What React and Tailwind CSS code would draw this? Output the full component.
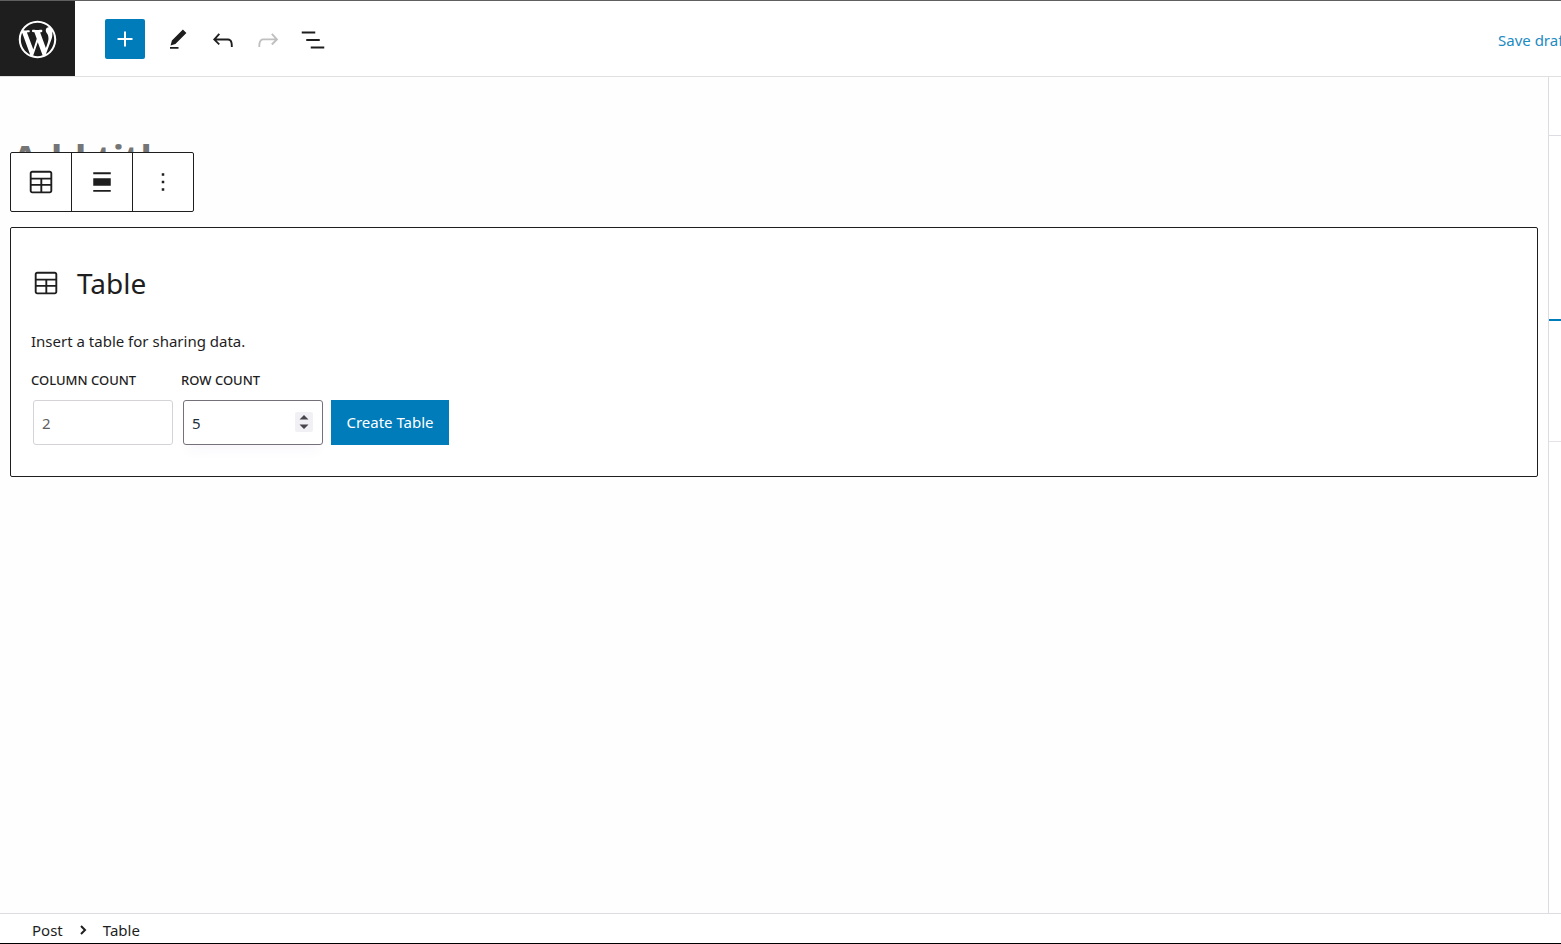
import React from "react";

const icons = {
  wordpress:
    "M20 10c0-5.51-4.49-10-10-10C4.48 0 0 4.49 0 10c0 5.52 4.48 10 10 10 5.51 0 10-4.48 10-10zM7.78 15.37L4.37 6.22c.55-.02 1.17-.08 1.17-.08.5-.06.44-1.13-.06-1.11 0 0-1.45.11-2.37.11-.18 0-.37 0-.58-.01C4.12 2.69 6.87 1.11 10 1.11c2.33 0 4.45.87 6.05 2.34-.68-.11-1.65.39-1.65 1.58 0 .74.45 1.36.9 2.1.35.61.55 1.36.55 2.46 0 1.49-1.4 5-1.4 5l-3.03-8.37c.54-.02.82-.17.82-.17.5-.05.44-1.25-.06-1.22 0 0-1.44.12-2.38.12-.87 0-2.33-.12-2.33-.12-.5-.03-.56 1.2-.06 1.22l.92.08 1.26 3.41zM17.41 10c.24-.64.74-1.87.43-4.25.7 1.29 1.05 2.71 1.05 4.25 0 3.29-1.73 6.24-4.4 7.78.97-2.59 1.94-5.2 2.92-7.78zM6.1 18.09C3.12 16.65 1.11 13.53 1.11 10c0-1.3.23-2.48.72-3.59C3.25 10.3 4.67 14.2 6.1 18.09zm4.03-6.63l2.58 6.98c-.86.29-1.76.45-2.71.45-.79 0-1.57-.11-2.29-.33.81-2.38 1.62-4.74 2.42-7.1z",
  plus: "M18 11.2h-5.2V6h-1.6v5.2H6v1.6h5.2V18h1.6v-5.2H18z",
  edit: "M20.4 5.1L16.9 1.6 5.9 12.6l-1.3 4.8 4.8-1.3L20.4 5.1zM4 20.8h8.5v-1.7H4v1.7z",
  undo: "M18.3 11.7c-.6-.6-1.4-.9-2.3-.9H6.7l2.9-3.3-1.1-1-4.5 5L8.5 16l1-1-2.7-2.7H16c.5 0 .9.2 1.3.5 1 1 1 3.4 1 4.5v.3h1.5v-.2c0-1.5 0-4.3-1.5-5.7z",
  redo: "M15.6 6.5l-1.1 1 2.9 3.3H8c-.9 0-1.7.3-2.3.9-1.4 1.5-1.4 4.2-1.4 5.6v.2h1.5v-.3c0-1.1 0-3.5 1-4.5.3-.3.7-.5 1.3-.5h9.2L14.5 15l1.1 1.1 4.6-4.6-4.6-5z",
  listView:
    "M13.8 5.2H3v1.5h10.8V5.2zm-3.6 12v1.5H21v-1.5H10.2zm7.2-6H6.6v1.5h10.8v-1.5z",
  table:
    "M19 3H5c-1.1 0-2 .9-2 2v14c0 1.1.9 2 2 2h14c1.1 0 2-.9 2-2V5c0-1.1-.9-2-2-2zM5 4.5h14c.3 0 .5.2.5.5v3.5h-15V5c0-.3.2-.5.5-.5zm8 5.5h6.5v3.5H13V10zm-1.5 3.5h-7V10h7v3.5zm-7 5.5v-4h7v4.5H5c-.3 0-.5-.2-.5-.5zm14.5.5h-6V15h6.5v4c0 .3-.2.5-.5.5z",
  align: "M5 15h14V9H5v6zm0 4.8h14v-1.5H5v1.5zM5 4.2v1.5h14V4.2H5z",
  more: "M13 19h-2v-2h2v2zm0-6h-2v-2h2v2zm0-6h-2V5h2v2z",
};

function Icon({ name, className = "size-[30px]", viewBox = "0 0 24 24" }) {
  return (
    <svg className={className} viewBox={viewBox} fill="currentColor" aria-hidden="true">
      <path d={icons[name]} />
    </svg>
  );
}

function ToolButton({ label, icon, iconClass, disabled }) {
  return (
    <button
      type="button"
      aria-label={label}
      disabled={disabled}
      className="flex size-[45px] items-center justify-center disabled:text-[#c0c0c0]"
    >
      <Icon name={icon} className={iconClass} />
    </button>
  );
}

const inputClass =
  "h-[45px] w-[140px] appearance-none rounded-[3px] border bg-white px-2 text-[15px] outline-none [appearance:textfield] [&::-webkit-inner-spin-button]:appearance-none";

function Header() {
  return (
    <header className="flex h-[77px] items-center overflow-hidden border-t border-b border-t-[#5f5f5f] border-b-[#e0e0e0] bg-white">
      <a
        href="#posts"
        aria-label="View posts"
        className="flex h-full w-[75px] shrink-0 items-center justify-center bg-[#1e1e1e] pt-[2px] text-white"
      >
        <Icon name="wordpress" className="size-[45px]" viewBox="-2 -2 24 24" />
      </a>
      <button
        type="button"
        aria-label="Add block"
        className="mr-[10px] ml-[30px] flex size-10 shrink-0 items-center justify-center rounded-[2px] bg-[#007cba] text-white"
      >
        <Icon name="plus" />
      </button>
      <div className="flex shrink-0 pt-[2px]">
        <ToolButton label="Tools" icon="edit" iconClass="size-6" />
        <ToolButton label="Undo" icon="undo" />
        <ToolButton label="Redo" icon="redo" disabled />
        <ToolButton label="List view" icon="listView" />
      </div>
      <button
        type="button"
        className="ml-auto w-16 shrink-0 overflow-hidden pt-1 pl-px text-left text-[15px] whitespace-nowrap text-[#1c8bc2]"
      >
        Save draft
      </button>
    </header>
  );
}

function BlockToolbar() {
  return (
    <div className="absolute top-[75px] left-[10px] flex divide-x divide-[#1e1e1e] rounded-[2px] border border-[#1e1e1e] bg-white">
      <button type="button" aria-label="Table" className="flex h-[58px] w-[61px] items-center justify-center">
        <Icon name="table" />
      </button>
      <button type="button" aria-label="Align" className="flex h-[58px] w-[61px] items-center justify-center">
        <Icon name="align" />
      </button>
      <button type="button" aria-label="Options" className="flex h-[58px] w-[60px] items-center justify-center">
        <Icon name="more" />
      </button>
    </div>
  );
}

function TableBlock() {
  const [columns, setColumns] = React.useState("2");
  const [rows, setRows] = React.useState("5");

  return (
    <section className="mx-[10px] h-[250px] rounded-[2px] border border-[#1e1e1e] bg-white px-5 pt-[31px]">
      <h2 className="flex h-12 items-center text-[28px]">
        <Icon name="table" className="mr-4 size-[30px]" />
        Table
      </h2>
      <p className="mt-6 text-[15px] leading-5">Insert a table for sharing data.</p>
      <form className="mt-[19px] flex" onSubmit={(e) => e.preventDefault()}>
        <div className="w-[150px]">
          <label htmlFor="columns" className="block text-[13px] leading-5 font-medium">
            COLUMN COUNT
          </label>
          <input
            type="number"
            id="columns"
            value={columns}
            onChange={(e) => setColumns(e.target.value)}
            className={`${inputClass} mt-[10px] ml-[2px] border-[#d5d3d8] text-[#606060]`}
          />
        </div>
        <div className="w-[150px]">
          <label htmlFor="rows" className="block text-[13px] leading-5 font-medium">
            ROW COUNT
          </label>
          <div className="relative mt-[10px] ml-[2px] w-[140px]">
            <input
              type="number"
              id="rows"
              value={rows}
              onChange={(e) => setRows(e.target.value)}
              className={`${inputClass} border-[#757079] text-[#23303c] shadow-[0_10px_12px_-4px_#f9f7fb]`}
            />
            <svg
              className="absolute top-3 right-[10px] h-5 w-[18px] rounded-[2px] bg-[#f1f0f4] text-[#48454d]"
              viewBox="0 0 18 20"
              fill="currentColor"
              aria-hidden="true"
            >
              <path d="M9 3l4.5 4.5h-9zM9 17L4.5 12.5h9z" />
            </svg>
          </div>
        </div>
        <button type="submit" className="mt-[30px] h-[45px] w-[118px] bg-[#007cba] text-[15px] text-white">
          Create Table
        </button>
      </form>
    </section>
  );
}

export default function App() {
  return (
    <div className="flex min-h-screen flex-col border-b border-black bg-white font-['Noto_Sans','Open_Sans',sans-serif] text-[#1e1e1e]">
      <Header />
      <div className="flex grow">
        <main className="relative min-w-0 grow bg-[#fefefe]">
          <h1 className="mt-[54px] h-24 px-3 text-[38px] leading-[54px] font-bold text-[#757575]">
            Add title
          </h1>
          <BlockToolbar />
          <TableBlock />
        </main>
        <aside className="w-[13px] shrink-0 border-l border-[#dddce2] bg-white">
          <div className="h-[59px] border-b border-[#dddce2]" />
          <div className="h-[185px] border-b-2 border-[#007cba]" />
          <div className="h-[121px] border-b border-[#e6e2ea]" />
        </aside>
      </div>
      <footer className="flex h-[30px] items-center border-t border-[#dddce2] pt-[3px] pl-8 text-[15px]">
        <nav aria-label="Block breadcrumb" className="flex items-center">
          <a href="#post">Post</a>
          <svg className="mx-4 h-[10px] w-2" viewBox="0 0 8 10" fill="none" stroke="currentColor" strokeWidth="2" aria-hidden="true">
            <path d="M2 1l4 4-4 4" />
          </svg>
          <a href="#table">Table</a>
        </nav>
      </footer>
    </div>
  );
}
